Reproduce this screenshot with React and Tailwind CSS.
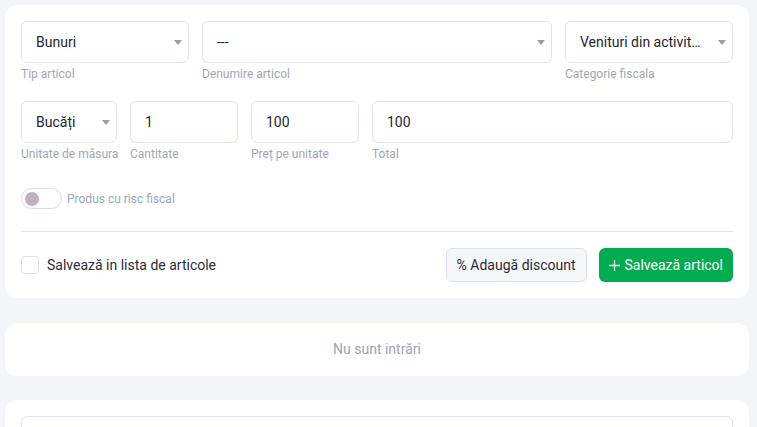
import React from "react";

const Arrow = () => (
  <svg width="8" height="5" viewBox="0 0 8 5" className="shrink-0">
    <path d="M0 0 L8 0 L4 5 Z" fill="#9a9cab" />
  </svg>
);

const Field = ({ children, label, select = false }) => (
  <div className="flex flex-col min-w-0">
    <div className="h-[42px] border border-[#e3e3ee] rounded-[6px] bg-white flex items-center pl-[14px] pr-[6px] text-[14px] text-[#222430] gap-[14px]">
      <span className="flex-1 whitespace-nowrap overflow-hidden">{children}</span>
      {select && <Arrow />}
    </div>
    <div className="mt-[3px] text-[12px] leading-[16px] text-[#a0a6b8] whitespace-nowrap">{label}</div>
  </div>
);

export default function App() {
  return (
    <div
      className="w-[757px] h-[427px] overflow-hidden bg-[#f4f5f8] pl-[5px] pr-[8px] pt-[5px]"
      style={{ fontFamily: "Roboto, 'Liberation Sans', sans-serif" }}
    >
      <div className="bg-white rounded-[12px] px-[16px] pt-[16px] pb-[16px]">
        <div className="grid grid-cols-[168px_1fr_168px] gap-[13px]">
          <Field label="Tip articol" select>Bunuri</Field>
          <Field label="Denumire articol" select>---</Field>
          <Field label="Categorie fiscala" select>Venituri din activit…</Field>
        </div>
        <div className="grid grid-cols-[96px_108px_108px_1fr] gap-[13px] mt-[19px]">
          <Field label="Unitate de măsura" select>Bucăți</Field>
          <Field label="Cantitate">1</Field>
          <Field label="Preț pe unitate">100</Field>
          <Field label="Total">100</Field>
        </div>
        <div className="flex items-center mt-[26px] gap-[5px]">
          <div className="w-[41px] h-[21px] rounded-full border border-[#dcdce8] bg-white flex items-center pl-[3px]">
            <div className="w-[14px] h-[14px] rounded-full bg-[#bfb2bd]" />
          </div>
          <span className="text-[12px] text-[#a0a6b8]">Produs cu risc fiscal</span>
        </div>
        <div className="h-px bg-[#e5e5ee] mt-[22px]" />
        <div className="flex items-center mt-[16px]">
          <div className="w-[18px] h-[18px] rounded-[4px] border border-[#dcdfe8] bg-white" />
          <span className="ml-[8px] text-[14px] text-[#2a2c36]">Salvează in lista de articole</span>
          <div className="flex-1" />
          <button className="h-[34px] px-[10px] rounded-[6px] border border-[#dde1ea] bg-[#f6f7fa] text-[14px] text-[#2a2c36] flex items-center">
            % Adaugă discount
          </button>
          <button className="ml-[12px] h-[34px] px-[10px] rounded-[6px] bg-[#00ac4f] text-[14px] text-white flex items-center gap-[5px]">
            <svg width="11" height="11" viewBox="0 0 11 11">
              <path d="M5.5 0 V11 M0 5.5 H11" stroke="#e6f5ec" strokeWidth="1.3" />
            </svg>
            Salvează articol
          </button>
        </div>
      </div>
      <div className="bg-white rounded-[12px] h-[53px] mt-[25px] flex items-center justify-center text-[14px] text-[#a0a4b4]">
        Nu sunt intrări
      </div>
      <div className="bg-white rounded-[12px] h-[60px] mt-[24px] px-[16px] pt-[16px]">
        <div className="h-[42px] border border-[#e3e3ee] rounded-[6px]" />
      </div>
    </div>
  );
}
